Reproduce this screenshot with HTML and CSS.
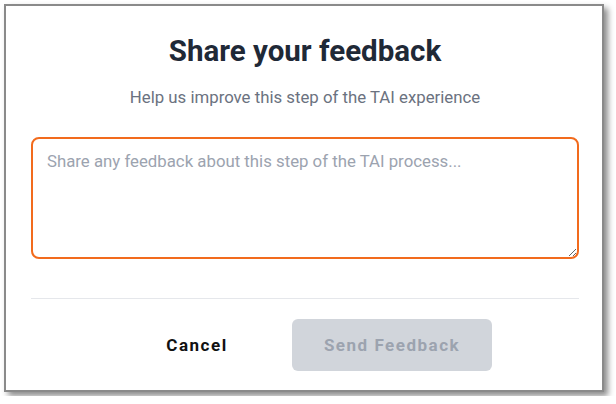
FILE: index.html
```html
<!DOCTYPE html>
<html>
<head>
  <title>Share your feedback</title>
  <meta charset="UTF-8" />
  <meta name="viewport" content="width=device-width, initial-scale=1.0" />
  <link rel="stylesheet" href="styles.css">
</head>
<body>

  <div class="modal">
    <!-- Heading -->
    <h1 class="modal-title">Share your feedback</h1>
    <p class="modal-subtitle">Help us improve this step of the TAI experience</p>

    <!-- Feedback box -->
    <textarea class="feedback-input" placeholder="Share any feedback about this step of the TAI process..."></textarea>

    <!-- Buttons -->
    <div class="modal-footer">
      <button class="btn btn-cancel">Cancel</button>
      <button class="btn btn-send" disabled>Send Feedback</button>
    </div>
  </div>

</body>
</html>
```

FILE: styles.css
```css
/* Page */
body {
  margin: 0;
  background: #ffffff;
  font-family: Roboto, "Liberation Sans", sans-serif;
}

/* Dialog frame */
.modal {
  box-sizing: border-box;
  width: 600px;
  height: 388px;
  margin: 4px;
  padding: 0 23px 0 25px;
  border: 2px solid #8a8a8a;
  box-shadow: 4px 4px 6px rgba(0, 0, 0, 0.45);
  background: #ffffff;
  display: flex;
  flex-direction: column;
  align-items: center;
}

.modal-title {
  margin: 28px 0 0;
  font-size: 29.5px;
  font-weight: 700;
  color: #1f2937;
}

.modal-subtitle {
  margin: 19px 0 0;
  font-size: 16.8px;
  color: #6b7280;
}

/* Text area with orange focus ring */
.feedback-input {
  box-sizing: border-box;
  width: 100%;
  height: 122px;
  margin-top: 30px;
  padding: 12px 14px;
  border: 2px solid #f26b1d;
  border-radius: 8px;
  outline: none;
  font-family: Roboto, "Liberation Sans", sans-serif;
  font-size: 16.8px;
  color: #1f2937;
  resize: vertical;
}

.feedback-input::placeholder {
  color: #9ca3af;
}

/* Footer with divider */
.modal-footer {
  width: 100%;
  margin-top: 39px;
  padding-top: 20px;
  border-top: 1px solid #e5e7eb;
  display: flex;
  justify-content: center;
  gap: 16px;
}

.btn {
  height: 52px;
  border: none;
  border-radius: 6px;
  font-family: Roboto, "Liberation Sans", sans-serif;
  font-size: 17px;
  font-weight: 700;
  letter-spacing: 1.5px;
}

.btn-cancel {
  width: 158px;
  background: transparent;
  color: #111111;
}

.btn-send {
  width: 200px;
  background: #d1d5db;
  color: #9ca3af;
}
```
